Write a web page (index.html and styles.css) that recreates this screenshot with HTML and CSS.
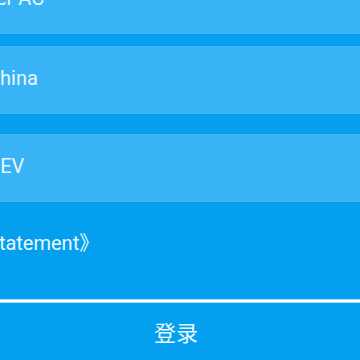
FILE: index.html
```html
<!DOCTYPE html>
<html>

<head>
	<meta charset="utf-8">
	<meta name="viewport" content="width=device-width, initial-scale=1">
	<title>登录</title>
	<link rel="stylesheet" href="styles.css">
</head>

<body>
	<div class="page">
		<div class="field"><span class="server">Server AC</span></div>
		<div class="field gap-s"><span>China</span></div>
		<div class="field gap-l"><span>DEV</span></div>
		<div class="statement"><span>Statement》</span></div>
		<div class="divider"></div>
		<button type="button" class="login">登录</button>
	</div>
</body>

</html>
```

FILE: styles.css
```css
* {
	margin: 0;
	padding: 0;
	box-sizing: border-box;
}

html,
body {
	width: 360px;
	height: 360px;
	overflow: hidden;
}

body {
	background-color: #04a0ef;
	font-family: Roboto, "Noto Sans CJK SC", sans-serif;
	color: #eaf7fe;
}

.page {
	display: flex;
	flex-direction: column;
	margin-top: -34px;
}

.field {
	height: 68px;
	padding-top: 16px;
	line-height: 30px;
	font-size: 20px;
	background-color: #37b3f6;
	border-top: 1px solid #3fb6f6;
	border-bottom: 1px solid #3fb6f6;
	white-space: nowrap;
}

.field span,
.statement span {
	margin-left: -13px;
}

.field .server {
	margin-left: -43px;
}

.gap-s {
	margin-top: 12px;
}

.gap-l {
	margin-top: 20px;
}

.statement {
	margin-top: 26px;
	font-size: 20px;
	line-height: 30px;
	white-space: nowrap;
}

.divider {
	margin-top: 41px;
	height: 4px;
	background-color: #fff;
	border-top: 1px solid #a8defa;
	border-bottom: 1px solid #a8defa;
}

.login {
	display: block;
	margin-top: 16px;
	padding-right: 8px;
	width: 100%;
	border: 0;
	background: none;
	font-family: "Noto Sans CJK SC", sans-serif;
	font-size: 22px;
	line-height: 24px;
	color: #eaf7fe;
	text-align: center;
}
```
